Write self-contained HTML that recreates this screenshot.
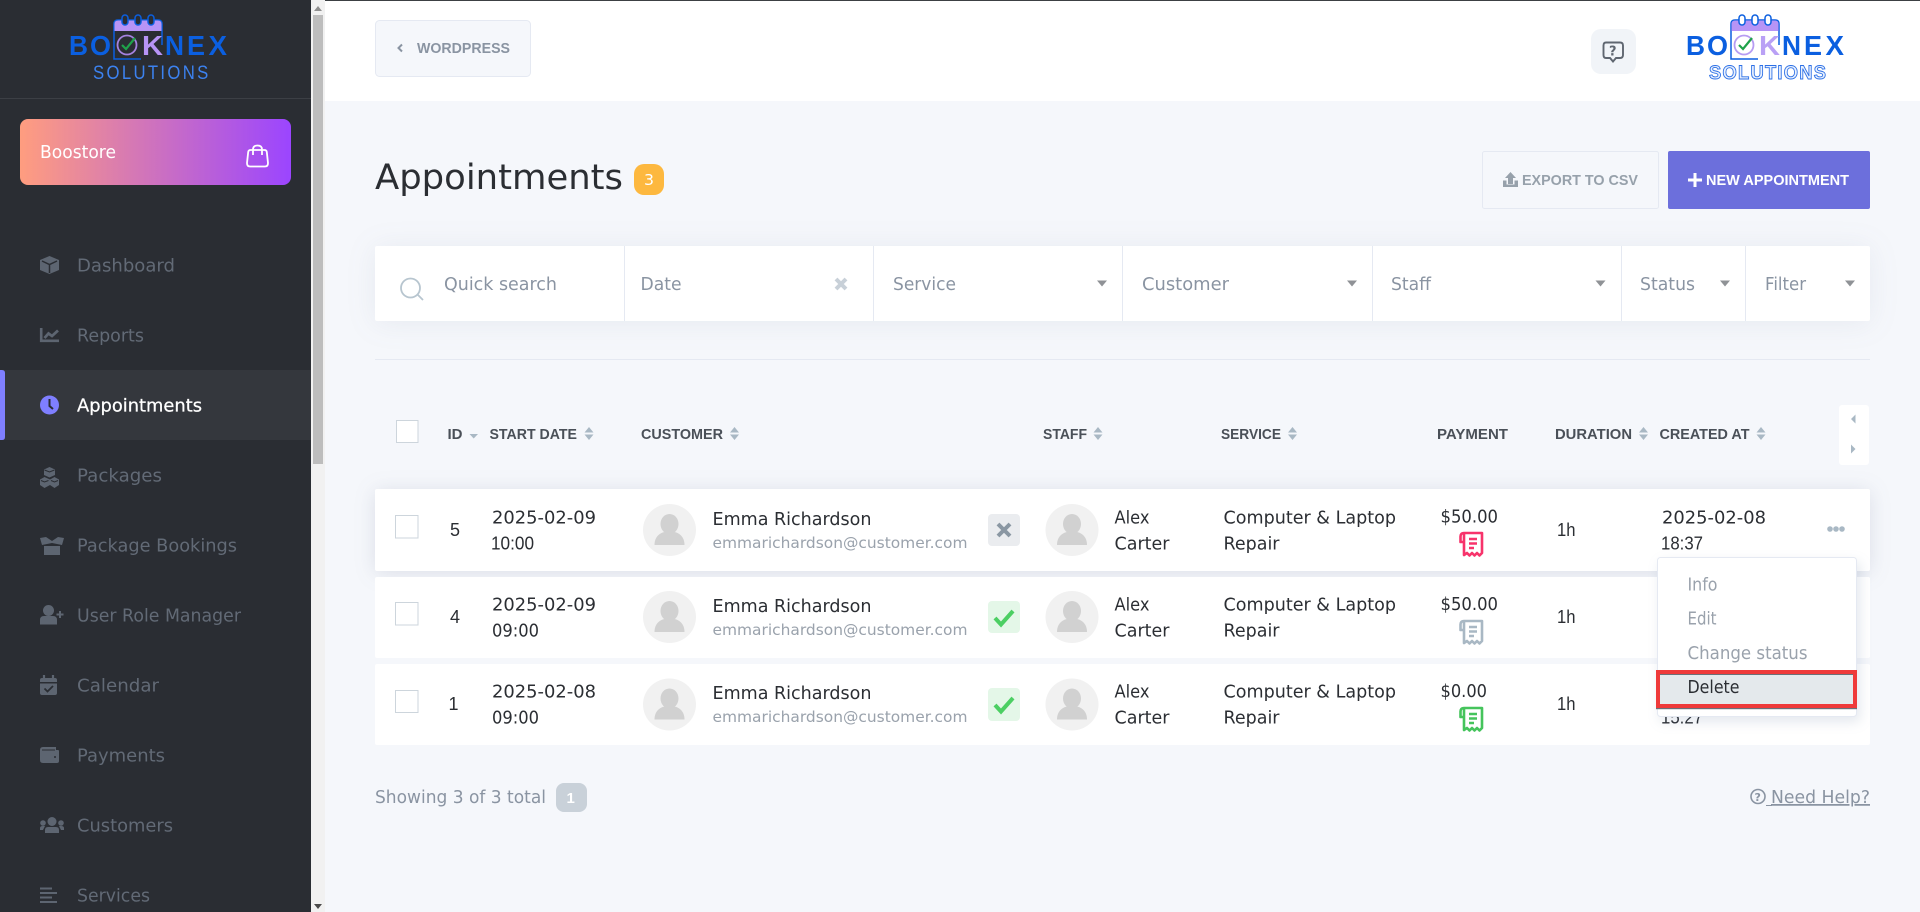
<!DOCTYPE html>
<html lang="en">
<head>
<meta charset="utf-8">
<title>Appointments</title>
<style>
html,body{margin:0;padding:0;width:1920px;height:912px;overflow:hidden;background:#f5f7fb}
svg{display:block}
text{font-family:"DejaVu Sans","Liberation Sans",sans-serif;font-size:17.5px;fill:#2b2e33}
.nav{fill:#626a76}
.hd{font-family:"Liberation Sans",sans-serif;font-weight:700;font-size:15px;fill:#4a5058}
.f{fill:#8a94a2}
.em{font-size:15.5px;fill:#9aa2ac}
.dd{fill:#9aa2ac}
.ic{fill:#5d6571}
.lg{font-family:"Liberation Sans",sans-serif;font-weight:700;font-size:27.5px;fill:#0b5fe0}
.n{font-family:"Liberation Sans",sans-serif;font-size:18px}
</style>
</head>
<body>
<svg xmlns="http://www.w3.org/2000/svg" width="1920" height="912" viewBox="0 0 1920 912">
<defs>
<g id="sort"><path d="M-4.500 -1L0 -6.500L4.500 -1Z M-4.500 1L0 6.500L4.500 1Z" fill="#a9b8c4"/></g>
<g id="ava"><ellipse cx="0" cy="0" rx="26.500" ry="26" fill="#f1f1f1"/><ellipse cx="0" cy="-6" rx="9" ry="10" fill="#d1d1d1"/><path d="M-15 15C-15 7 -10 3 -5 2H5C10 3 15 7 15 15Z" fill="#d1d1d1"/></g>
<path id="rc" d="M5 2H23V22L20.500 24.500L18 22L15.500 24.500L13 22L10.500 24.500L8 22L5 24Z M5 2C2.500 2 1.500 3.500 1.500 5.500V11H5 M10 8H18 M10 12.500H18 M10 17H15" fill="none" stroke-width="2.600" stroke-linejoin="round"/>
<path id="arr" d="M-5 -3H5L0 3Z" fill="#8f9296"/>
</defs>

<!-- page -->
<rect width="1920" height="912" fill="#f5f7fb"/>
<rect x="325" y="0" width="1595" height="101" fill="#fff"/>
<rect x="0" y="0" width="1920" height="1" fill="#3c4043"/>

<!-- sidebar -->
<rect x="0" y="0" width="311" height="912" fill="#2a2d33"/>
<rect x="0" y="98" width="311" height="1" fill="#3c3f45"/>
<rect x="311" y="0" width="14" height="912" fill="#f1f1f1"/>
<rect x="313" y="15" width="10" height="449" fill="#bdbdbd"/>
<path d="M314 11L318 6L322 11Z" fill="#8f8f8f"/>
<path d="M314 904L318 909L322 904Z" fill="#4a4a4a"/>

<!-- left logo -->
<g>
<path d="M141 59H114V24Q114 20 118 20H158Q162 20 162 24V45" fill="none" stroke="#0b5fe0" stroke-width="1.500"/>
<path d="M114.500 31V24Q114.500 20.500 118 20.500H158Q161.500 20.500 161.500 24V31Z" fill="#b794f6"/>
<rect x="122" y="15" width="6" height="10" rx="3" fill="#2a2d33" stroke="#0b5fe0" stroke-width="1.500"/>
<rect x="135" y="15" width="6" height="10" rx="3" fill="#2a2d33" stroke="#0b5fe0" stroke-width="1.500"/>
<rect x="148" y="15" width="6" height="10" rx="3" fill="#2a2d33" stroke="#0b5fe0" stroke-width="1.500"/>
<text class="lg" x="69" y="55" textLength="19" lengthAdjust="spacingAndGlyphs">B</text>
<text class="lg" x="90" y="55" textLength="21" lengthAdjust="spacingAndGlyphs">O</text>
<circle cx="127" cy="45" r="9.500" fill="none" stroke="#a582e0" stroke-width="1.800"/>
<path d="M122 45L126 49L135 38" fill="none" stroke="#1fa24a" stroke-width="2.200"/>
<text class="lg" x="142" y="55" style="fill:#b794f6" textLength="21" lengthAdjust="spacingAndGlyphs">K</text>
<text class="lg" x="165" y="55" textLength="19" lengthAdjust="spacingAndGlyphs">N</text>
<text class="lg" x="187" y="55" textLength="18" lengthAdjust="spacingAndGlyphs">E</text>
<text class="lg" x="208.500" y="55" textLength="18.500" lengthAdjust="spacingAndGlyphs">X</text>
<text transform="translate(93 79) scale(.88 1)" style="font-family:'Liberation Sans',sans-serif;font-size:19px;fill:#3c82f0" textLength="131" lengthAdjust="spacing">SOLUTIONS</text>
</g>

<!-- boostore -->
<defs><linearGradient id="bs" x1="0" x2="1" y1="0" y2="0"><stop offset="0" stop-color="#ff9d7f"/><stop offset="1" stop-color="#9b45ff"/></linearGradient></defs>
<rect x="20" y="119" width="271" height="66" rx="8" fill="url(#bs)"/>
<text x="40" y="158" style="fill:#fff" textLength="76" lengthAdjust="spacingAndGlyphs">Boostore</text>
<path d="M250.500 150H264.500Q266.500 150 266.800 152L268 163Q268 166.500 265 166.500H250Q247 166.500 247 163L248.200 152Q248.500 150 250.500 150Z M253 155V149.500Q253 145.500 257.500 145.500Q262 145.500 262 149.500V155" fill="none" stroke="#fff" stroke-width="1.800"/>

<!-- nav -->
<rect x="0" y="370" width="311" height="70" fill="#34373d"/>
<path d="M0 370H2Q5 370 5 373V437Q5 440 2 440H0Z" fill="#7f7fff"/>
<text class="nav" x="77" y="271.500" textLength="98" lengthAdjust="spacingAndGlyphs">Dashboard</text>
<text class="nav" x="77" y="341.500" textLength="67" lengthAdjust="spacingAndGlyphs">Reports</text>
<text x="77" y="411.500" style="fill:#fff;stroke:#fff;stroke-width:.25px" textLength="125" lengthAdjust="spacingAndGlyphs">Appointments</text>
<text class="nav" x="77" y="481.500" textLength="85" lengthAdjust="spacingAndGlyphs">Packages</text>
<text class="nav" x="77" y="551.500" textLength="160" lengthAdjust="spacingAndGlyphs">Package Bookings</text>
<text class="nav" x="77" y="621.500" textLength="164" lengthAdjust="spacingAndGlyphs">User Role Manager</text>
<text class="nav" x="77" y="691.500" textLength="82" lengthAdjust="spacingAndGlyphs">Calendar</text>
<text class="nav" x="77" y="761.500" textLength="88" lengthAdjust="spacingAndGlyphs">Payments</text>
<text class="nav" x="77" y="831.500" textLength="96" lengthAdjust="spacingAndGlyphs">Customers</text>
<text class="nav" x="77" y="901.500" textLength="73" lengthAdjust="spacingAndGlyphs">Services</text>

<!-- nav icons -->
<path class="ic" d="M49.500 256L59 260V270L49.500 274L40 270V260Z"/>
<path d="M42 261L49.500 264.500L57 261 M49.500 264.500V273" fill="none" stroke="#2a2d33" stroke-width="1.500"/>
<path d="M41.200 328V340.800H59" fill="none" stroke="#5d6571" stroke-width="2.600"/>
<path d="M44.500 338L48.500 333.500L52 336L58 330.500" fill="none" stroke="#5d6571" stroke-width="2.800"/>
<circle cx="49.500" cy="405" r="9.500" fill="#7f7fff"/>
<path d="M49.500 399V406L53 409" fill="none" stroke="#2a2d33" stroke-width="2"/>
<path class="ic" d="M49.500 467L55 469.500V475L49.500 477.500L44 475V469.500Z M44.500 477L50 479.500V485L44.500 488L40 485V479.500Z M54.500 477L59 479.500V485L54.500 488L50 485V479.500Z"/>
<path d="M44.500 470L49.500 472L54.500 470 M41 480.500L44.500 482L48.500 480.500 M51 480.500L54.500 482L58 480.500" fill="none" stroke="#2a2d33" stroke-width="1"/>
<path class="ic" d="M44 546H60V555H44Z M40 538L46 537L52 541L58 537L64 538L62 545L52 543L42 545Z"/>
<circle class="ic" cx="48.500" cy="610.500" r="5.500"/>
<path class="ic" d="M40 624.500V620Q40 616 44 616H53Q57 616 57 620V624.500Z"/>
<path d="M56.500 614.500H63.500 M60 611V618" stroke="#5d6571" stroke-width="2" fill="none"/>
<path class="ic" d="M42 678H55Q57 678 57 680V693Q57 695 55 695H42Q40 695 40 693V680Q40 678 42 678Z"/>
<path d="M44 675V679 M53 675V679" stroke="#5d6571" stroke-width="2.200"/>
<rect x="40" y="682" width="17" height="1.500" fill="#2a2d33"/>
<path d="M44.500 688.500L47.500 691.500L53 686" fill="none" stroke="#2a2d33" stroke-width="1.800"/>
<path class="ic" d="M43 747H56V750H58Q59 750 59 751V761Q59 763 57 763H43Q40 763 40 760V750Q40 747 43 747Z"/>
<circle cx="55" cy="757" r="1" fill="#2a2d33"/>
<rect x="42" y="749.500" width="13" height="1" fill="#2a2d33"/>
<circle class="ic" cx="52" cy="821.500" r="4.500"/><circle class="ic" cx="43" cy="823" r="2.800"/><circle class="ic" cx="61" cy="823" r="2.800"/>
<path class="ic" d="M45 833V830Q45 827 48 827H56Q59 827 59 830V833Z M40 830V828Q40 826 43 826H45L43 830Z M64 830V828Q64 826 61 826H59L61 830Z"/>
<path d="M40 888.500H52 M40 893H57 M40 897.500H52 M40 902H57" stroke="#5d6571" stroke-width="2" fill="none"/>

<!-- header -->
<rect x="375.500" y="20.500" width="155" height="56" rx="4" fill="#f5f7fb" stroke="#e5e9f2"/>
<path d="M402 44.500L398.500 48L402 51.500" fill="none" stroke="#8a94a2" stroke-width="2"/>
<text x="417" y="53" style="font-family:'Liberation Sans',sans-serif;font-weight:700;font-size:14.500px;fill:#8a94a2" textLength="93" lengthAdjust="spacingAndGlyphs">WORDPRESS</text>
<rect x="1591" y="29" width="45" height="45" rx="10" fill="#f1f4f8"/>
<path d="M1606 42.500H1620Q1623 42.500 1623 45.500V55Q1623 58 1620 58H1616L1613 61.500L1610 58H1606Q1603.500 58 1603.500 55V45.500Q1603.500 42.500 1606 42.500Z" fill="none" stroke="#5f6670" stroke-width="1.900"/>
<text x="1609" y="55.500" style="font-size:13px;font-weight:700;fill:#5f6670">?</text>

<!-- right logo -->
<g>
<path d="M1758 59H1731V24Q1731 20 1735 20H1775Q1779 20 1779 24V45" fill="none" stroke="#0b5fe0" stroke-width="1.500"/>
<path d="M1731.500 31V24Q1731.500 20.500 1735 20.500H1775Q1778.500 20.500 1778.500 24V31Z" fill="#b794f6"/>
<rect x="1739" y="15" width="6" height="10" rx="3" fill="#fff" stroke="#0b5fe0" stroke-width="1.500"/>
<rect x="1752" y="15" width="6" height="10" rx="3" fill="#fff" stroke="#0b5fe0" stroke-width="1.500"/>
<rect x="1765" y="15" width="6" height="10" rx="3" fill="#fff" stroke="#0b5fe0" stroke-width="1.500"/>
<text class="lg" x="1686" y="55" textLength="19" lengthAdjust="spacingAndGlyphs">B</text>
<text class="lg" x="1707" y="55" textLength="21" lengthAdjust="spacingAndGlyphs">O</text>
<circle cx="1744" cy="45" r="9.500" fill="none" stroke="#b79cf2" stroke-width="1.800"/>
<path d="M1739 45L1743 49L1752 38" fill="none" stroke="#1fa24a" stroke-width="2.200"/>
<text class="lg" x="1759" y="55" style="fill:#b9a0f5" textLength="21" lengthAdjust="spacingAndGlyphs">K</text>
<text class="lg" x="1782" y="55" textLength="19" lengthAdjust="spacingAndGlyphs">N</text>
<text class="lg" x="1804" y="55" textLength="18" lengthAdjust="spacingAndGlyphs">E</text>
<text class="lg" x="1825.500" y="55" textLength="18.500" lengthAdjust="spacingAndGlyphs">X</text>
<text transform="translate(1709 79) scale(.94 1)" style="font-family:'Liberation Sans',sans-serif;font-weight:700;font-size:19.500px;fill:#e8f0fd;stroke:#2b6fe6;stroke-width:.9px" textLength="124.500" lengthAdjust="spacing">SOLUTIONS</text>
</g>

<!-- title -->
<text x="375" y="189" style="font-size:35px" textLength="248" lengthAdjust="spacingAndGlyphs">Appointments</text>
<rect x="634" y="164" width="30" height="31" rx="10" fill="#fdb83f"/>
<text x="644" y="185" style="font-size:15px;fill:#fff" textLength="10" lengthAdjust="spacingAndGlyphs">3</text>

<rect x="1482.500" y="151.500" width="176" height="57" rx="2" fill="#f5f7fb" stroke="#e5e9f2"/>
<path d="M1510.500 172L1516 178H1513V184H1508V178H1505Z M1503 180.500H1506.500V184.500H1514.500V180.500H1518V187H1503Z" fill="#97a1ab"/>
<text x="1522" y="185" style="font-family:'Liberation Sans',sans-serif;font-weight:700;font-size:15px;fill:#97a1ab" textLength="116" lengthAdjust="spacingAndGlyphs">EXPORT TO CSV</text>
<rect x="1668" y="151" width="202" height="58" rx="2" fill="#6c6fdc"/>
<path d="M1695 173V187 M1688 180H1702" stroke="#fff" stroke-width="3" fill="none"/>
<text x="1706" y="185" style="font-family:'Liberation Sans',sans-serif;font-weight:700;font-size:15px;fill:#fff" textLength="143" lengthAdjust="spacingAndGlyphs">NEW APPOINTMENT</text>

<!-- filter bar -->
<rect x="375" y="246" width="1495" height="75" rx="2" fill="#fff" style="filter:drop-shadow(0 2px 14px rgba(90,100,130,.09))"/>
<path d="M624.500 246V321 M873.500 246V321 M1122.500 246V321 M1372.500 246V321 M1621.500 246V321 M1745.500 246V321" stroke="#e5e9f2"/>
<circle cx="410.500" cy="288" r="9.500" fill="none" stroke="#b7c5cf" stroke-width="1.800"/>
<path d="M418 295L423 300" stroke="#b7c5cf" stroke-width="1.800"/>
<text class="f" x="444" y="290" textLength="113" lengthAdjust="spacingAndGlyphs">Quick search</text>
<text class="f" x="640.500" y="290" textLength="41" lengthAdjust="spacingAndGlyphs">Date</text>
<path d="M836 279L846 289 M846 279L836 289" stroke="#c8d0d8" stroke-width="4"/>
<text class="f" x="893" y="290" textLength="63" lengthAdjust="spacingAndGlyphs">Service</text>
<use href="#arr" x="1102" y="283.500"/>
<text class="f" x="1142" y="290" textLength="87" lengthAdjust="spacingAndGlyphs">Customer</text>
<use href="#arr" x="1352" y="283.500"/>
<text class="f" x="1391" y="290" textLength="40" lengthAdjust="spacingAndGlyphs">Staff</text>
<use href="#arr" x="1600.500" y="283.500"/>
<text class="f" x="1640" y="290" textLength="55" lengthAdjust="spacingAndGlyphs">Status</text>
<use href="#arr" x="1725" y="283.500"/>
<text class="f" x="1765" y="290" textLength="41" lengthAdjust="spacingAndGlyphs">Filter</text>
<use href="#arr" x="1850" y="283.500"/>

<rect x="375" y="359" width="1495" height="1" fill="#e5e9f2"/>

<!-- table head -->
<rect x="396.500" y="420.500" width="21.500" height="22" fill="#fff" stroke="#cdd5dc"/>
<text class="hd" x="447.500" y="439" textLength="15" lengthAdjust="spacingAndGlyphs">ID</text>
<path d="M469.500 434H478L473.700 438.500Z" fill="#a9b8c4"/>
<text class="hd" x="489.500" y="439" textLength="87.500" lengthAdjust="spacingAndGlyphs">START DATE</text>
<use href="#sort" x="589" y="433.500"/>
<text class="hd" x="641" y="439" textLength="82" lengthAdjust="spacingAndGlyphs">CUSTOMER</text>
<use href="#sort" x="734.500" y="433.500"/>
<text class="hd" x="1043" y="439" textLength="44" lengthAdjust="spacingAndGlyphs">STAFF</text>
<use href="#sort" x="1098" y="433.500"/>
<text class="hd" x="1221" y="439" textLength="60" lengthAdjust="spacingAndGlyphs">SERVICE</text>
<use href="#sort" x="1292.500" y="433.500"/>
<text class="hd" x="1437" y="439" textLength="71" lengthAdjust="spacingAndGlyphs">PAYMENT</text>
<text class="hd" x="1555" y="439" textLength="77" lengthAdjust="spacingAndGlyphs">DURATION</text>
<use href="#sort" x="1643.500" y="433.500"/>
<text class="hd" x="1659.500" y="439" textLength="90" lengthAdjust="spacingAndGlyphs">CREATED AT</text>
<use href="#sort" x="1761" y="433.500"/>
<rect x="1839" y="405" width="30" height="60" rx="3" fill="#fff"/>
<path d="M1855.500 414.500V423.500L1851 419Z M1851 444.500V453.500L1855.500 449Z" fill="#a9b8c4"/>

<!-- rows -->
<rect x="375" y="489" width="1495" height="82" rx="2" fill="#fff" style="filter:drop-shadow(0 2px 10px rgba(70,80,110,.14))"/>
<rect x="375" y="577" width="1495" height="81" rx="2" fill="#fff"/>
<rect x="375" y="664" width="1495" height="81" rx="2" fill="#fff"/>

<!-- row 1 -->
<g>
<rect x="395.500" y="515.500" width="22.500" height="22.500" fill="#fff" stroke="#cdd5dc"/>
<text class="n" x="450" y="536">5</text>
<text x="492" y="523.500" textLength="104" lengthAdjust="spacingAndGlyphs">2025-02-09</text>
<text class="n" x="491" y="549.500" textLength="43" lengthAdjust="spacingAndGlyphs">10:00</text>
<use href="#ava" x="669.500" y="530"/>
<text x="712.500" y="525" textLength="159" lengthAdjust="spacingAndGlyphs">Emma Richardson</text>
<text class="em" x="712.500" y="548" textLength="255" lengthAdjust="spacingAndGlyphs">emmarichardson@customer.com</text>
<rect x="988" y="514" width="32" height="32" rx="4" fill="#eaecef"/>
<path d="M998 524L1010 536 M1010 524L998 536" stroke="#8a97a3" stroke-width="4"/>
<use href="#ava" x="1072" y="530"/>
<text x="1114.500" y="523.500" textLength="35" lengthAdjust="spacingAndGlyphs">Alex</text>
<text x="1114.500" y="549.500" textLength="55" lengthAdjust="spacingAndGlyphs">Carter</text>
<text x="1223.500" y="523.500" textLength="172.500" lengthAdjust="spacingAndGlyphs">Computer &amp; Laptop</text>
<text x="1223.500" y="549.500" textLength="56" lengthAdjust="spacingAndGlyphs">Repair</text>
<text x="1440.500" y="522.500" textLength="57.500" lengthAdjust="spacingAndGlyphs">$50.00</text>
<use href="#rc" x="1459" y="531" stroke="#f7336b"/>
<text class="n" x="1557" y="536" textLength="18.500" lengthAdjust="spacingAndGlyphs">1h</text>
<text x="1662" y="523.500" textLength="104" lengthAdjust="spacingAndGlyphs">2025-02-08</text>
<text class="n" x="1661" y="549.500" textLength="42" lengthAdjust="spacingAndGlyphs">18:37</text>
<circle cx="1830" cy="529" r="2.800" fill="#a9b8c4"/><circle cx="1836" cy="529" r="2.800" fill="#a9b8c4"/><circle cx="1842" cy="529" r="2.800" fill="#a9b8c4"/>
</g>

<!-- row 2 -->
<g>
<rect x="395.500" y="602.500" width="22.500" height="22.500" fill="#fff" stroke="#cdd5dc"/>
<text class="n" x="450" y="623">4</text>
<text x="492" y="610.500" textLength="104" lengthAdjust="spacingAndGlyphs">2025-02-09</text>
<text x="492" y="636.500" textLength="47" lengthAdjust="spacingAndGlyphs">09:00</text>
<use href="#ava" x="669.500" y="617"/>
<text x="712.500" y="612" textLength="159" lengthAdjust="spacingAndGlyphs">Emma Richardson</text>
<text class="em" x="712.500" y="635" textLength="255" lengthAdjust="spacingAndGlyphs">emmarichardson@customer.com</text>
<rect x="988" y="601" width="32" height="32" rx="4" fill="#e4f7e8"/>
<path d="M995 618L1001 624.500L1013 611" fill="none" stroke="#4ccf63" stroke-width="4"/>
<use href="#ava" x="1072" y="617"/>
<text x="1114.500" y="610.500" textLength="35" lengthAdjust="spacingAndGlyphs">Alex</text>
<text x="1114.500" y="636.500" textLength="55" lengthAdjust="spacingAndGlyphs">Carter</text>
<text x="1223.500" y="610.500" textLength="172.500" lengthAdjust="spacingAndGlyphs">Computer &amp; Laptop</text>
<text x="1223.500" y="636.500" textLength="56" lengthAdjust="spacingAndGlyphs">Repair</text>
<text x="1440.500" y="610" textLength="57.500" lengthAdjust="spacingAndGlyphs">$50.00</text>
<use href="#rc" x="1459" y="619" stroke="#a9b8c4"/>
<text class="n" x="1557" y="623" textLength="18.500" lengthAdjust="spacingAndGlyphs">1h</text>
</g>

<!-- row 3 -->
<g>
<rect x="395.500" y="690.500" width="22.500" height="22" fill="#fff" stroke="#cdd5dc"/>
<text class="n" x="448.500" y="710">1</text>
<text x="492" y="697.500" textLength="104" lengthAdjust="spacingAndGlyphs">2025-02-08</text>
<text x="492" y="723.500" textLength="47" lengthAdjust="spacingAndGlyphs">09:00</text>
<use href="#ava" x="669.500" y="704.500"/>
<text x="712.500" y="699" textLength="159" lengthAdjust="spacingAndGlyphs">Emma Richardson</text>
<text class="em" x="712.500" y="722" textLength="255" lengthAdjust="spacingAndGlyphs">emmarichardson@customer.com</text>
<rect x="988" y="688" width="32" height="33" rx="4" fill="#e4f7e8"/>
<path d="M995 705L1001 711.500L1013 698" fill="none" stroke="#4ccf63" stroke-width="4"/>
<use href="#ava" x="1072" y="704.500"/>
<text x="1114.500" y="697.500" textLength="35" lengthAdjust="spacingAndGlyphs">Alex</text>
<text x="1114.500" y="723.500" textLength="55" lengthAdjust="spacingAndGlyphs">Carter</text>
<text x="1223.500" y="697.500" textLength="172.500" lengthAdjust="spacingAndGlyphs">Computer &amp; Laptop</text>
<text x="1223.500" y="723.500" textLength="56" lengthAdjust="spacingAndGlyphs">Repair</text>
<text x="1440.500" y="697" textLength="46.500" lengthAdjust="spacingAndGlyphs">$0.00</text>
<use href="#rc" x="1459" y="706" stroke="#45c45c"/>
<text class="n" x="1557" y="710" textLength="18.500" lengthAdjust="spacingAndGlyphs">1h</text>
<text class="n" x="1661" y="723.500" textLength="42" lengthAdjust="spacingAndGlyphs">15:27</text>
</g>

<!-- dropdown -->
<rect x="1657.500" y="557.500" width="199" height="159" rx="3" fill="#fff" stroke="#e5e9f2" style="filter:drop-shadow(3px 5px 6px rgba(90,110,150,.16))"/>
<text class="dd" x="1687.500" y="590.500" textLength="30" lengthAdjust="spacingAndGlyphs">Info</text>
<text class="dd" x="1687.500" y="624.500" textLength="29" lengthAdjust="spacingAndGlyphs">Edit</text>
<text class="dd" x="1687.500" y="659" textLength="120" lengthAdjust="spacingAndGlyphs">Change status</text>
<rect x="1658" y="672" width="198" height="35" fill="#e4e9ec"/>
<rect x="1656" y="708" width="201" height="1.200" fill="#6b7078"/>
<rect x="1658" y="674" width="196" height="1" fill="#6b7078"/>
<rect x="1658" y="672" width="197" height="34" fill="none" stroke="#ef3a3a" stroke-width="4"/>
<text x="1687.500" y="693" textLength="52" lengthAdjust="spacingAndGlyphs">Delete</text>

<!-- footer -->
<text class="f" x="375" y="803" textLength="171" lengthAdjust="spacingAndGlyphs">Showing 3 of 3 total</text>
<rect x="556" y="783" width="31" height="29" rx="8" fill="#c9d1d9"/>
<text x="566.500" y="803" style="font-family:'Liberation Sans',sans-serif;font-weight:700;font-size:15px;fill:#fff">1</text>
<circle cx="1758" cy="796.500" r="7" fill="none" stroke="#8a94a2" stroke-width="1.600"/>
<text x="1754.500" y="801" style="font-size:11px;font-weight:700;fill:#8a94a2">?</text>
<text class="f" x="1771" y="803" textLength="99" lengthAdjust="spacingAndGlyphs" text-decoration="underline">Need Help?</text>
<rect x="1766" y="805" width="6" height="1" fill="#8a94a2"/>
</svg>
</body>
</html>
